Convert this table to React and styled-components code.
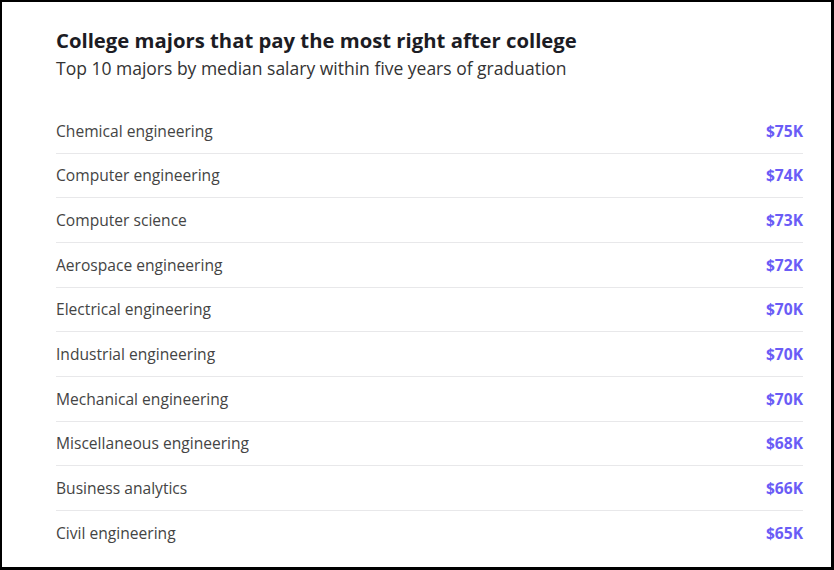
import React from 'react';
import styled, { createGlobalStyle } from 'styled-components';

const GlobalStyle = createGlobalStyle`
  * { box-sizing: border-box; margin: 0; padding: 0; }
  body { margin: 0; background: #fff; font-family: "Open Sans", "Lato", sans-serif; }
`;

const Frame = styled.div`
  width: 834px;
  height: 570px;
  border-style: solid;
  border-color: #000;
  border-width: 2px 3px 3px 2px;
  background: #fff;
  padding: 25px 28px 0 54px;
`;

const Title = styled.h1`
  font-size: 20.3px;
  font-weight: 700;
  color: #1c1c24;
  line-height: 26px;
`;

const Subtitle = styled.p`
  font-size: 17.5px;
  font-weight: 400;
  color: #333;
  line-height: 26px;
  margin-top: 2px;
`;

const List = styled.ul`
  list-style: none;
  margin-top: 28px;
`;

const Row = styled.li`
  display: flex;
  align-items: center;
  justify-content: space-between;
  height: 44.67px;
  border-bottom: ${(p) => (p.$last ? 'none' : '1px solid #e8e8ea')};
  font-size: 15.6px;
`;

const Major = styled.span`
  color: #444;
`;

const Salary = styled.span`
  color: #6a5cf6;
  font-weight: 700;
`;

const majors = [
  ['Chemical engineering', '$75K'],
  ['Computer engineering', '$74K'],
  ['Computer science', '$73K'],
  ['Aerospace engineering', '$72K'],
  ['Electrical engineering', '$70K'],
  ['Industrial engineering', '$70K'],
  ['Mechanical engineering', '$70K'],
  ['Miscellaneous engineering', '$68K'],
  ['Business analytics', '$66K'],
  ['Civil engineering', '$65K'],
];

export default function App() {
  return (
    <>
      <GlobalStyle />
      <Frame>
        <Title>College majors that pay the most right after college</Title>
        <Subtitle>Top 10 majors by median salary within five years of graduation</Subtitle>
        <List>
          {majors.map(([name, pay], i) => (
            <Row key={name} $last={i === majors.length - 1}>
              <Major>{name}</Major>
              <Salary>{pay}</Salary>
            </Row>
          ))}
        </List>
      </Frame>
    </>
  );
}
